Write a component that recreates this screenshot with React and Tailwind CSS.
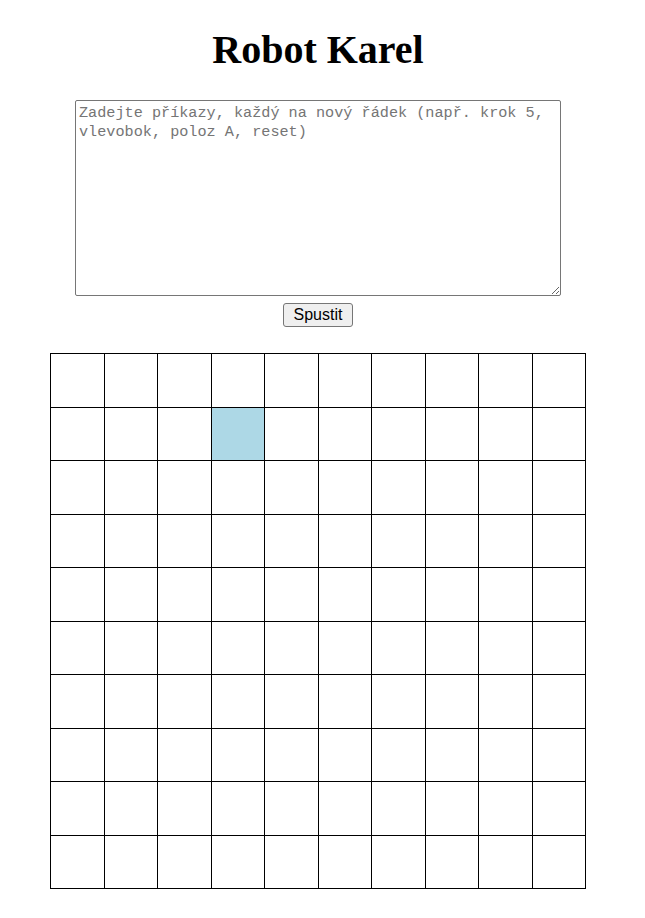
import { useState } from 'react';

const SIZE = 10;

export default function App() {
  const [commands, setCommands] = useState('');
  const [pos] = useState({ x: 3, y: 1 });

  const cells = [];
  for (let y = 0; y < SIZE; y++) {
    for (let x = 0; x < SIZE; x++) {
      const active = x === pos.x && y === pos.y;
      cells.push(
        <div
          key={`${x}-${y}`}
          className={`h-[53.5px] border-r border-b border-black ${active ? 'bg-[#add8e6]' : 'bg-white'}`}
        />
      );
    }
  }

  return (
    <div className="min-h-screen bg-white w-[636px] flex flex-col items-center">
      <h1 className="mt-[27px] text-[40px] leading-[46px] font-bold text-black font-['Liberation_Serif',serif]">
        Robot Karel
      </h1>

      <textarea
        value={commands}
        onChange={(e) => setCommands(e.target.value)}
        placeholder="Zadejte příkazy, každý na nový řádek (např. krok 5, vlevobok, poloz A, reset)"
        className="mt-[27px] w-[486px] h-[196px] border border-[#767676] rounded-[2px] px-[3px] pt-[3px] pb-[2px] text-[15.2px] leading-[19px] font-['Liberation_Mono',monospace] placeholder:text-[#757575] text-black resize"
      />

      <button
        type="button"
        className="mt-[7px] h-[24px] px-[10px] bg-[#efefef] border border-[#767676] rounded-[3px] text-[16px] leading-[20px] text-black font-['Liberation_Sans',Arial,sans-serif]"
      >
        Spustit
      </button>

      <div className="mt-[26px] w-[536px] grid grid-cols-10 border-l border-t border-black">
        {cells}
      </div>
    </div>
  );
}
